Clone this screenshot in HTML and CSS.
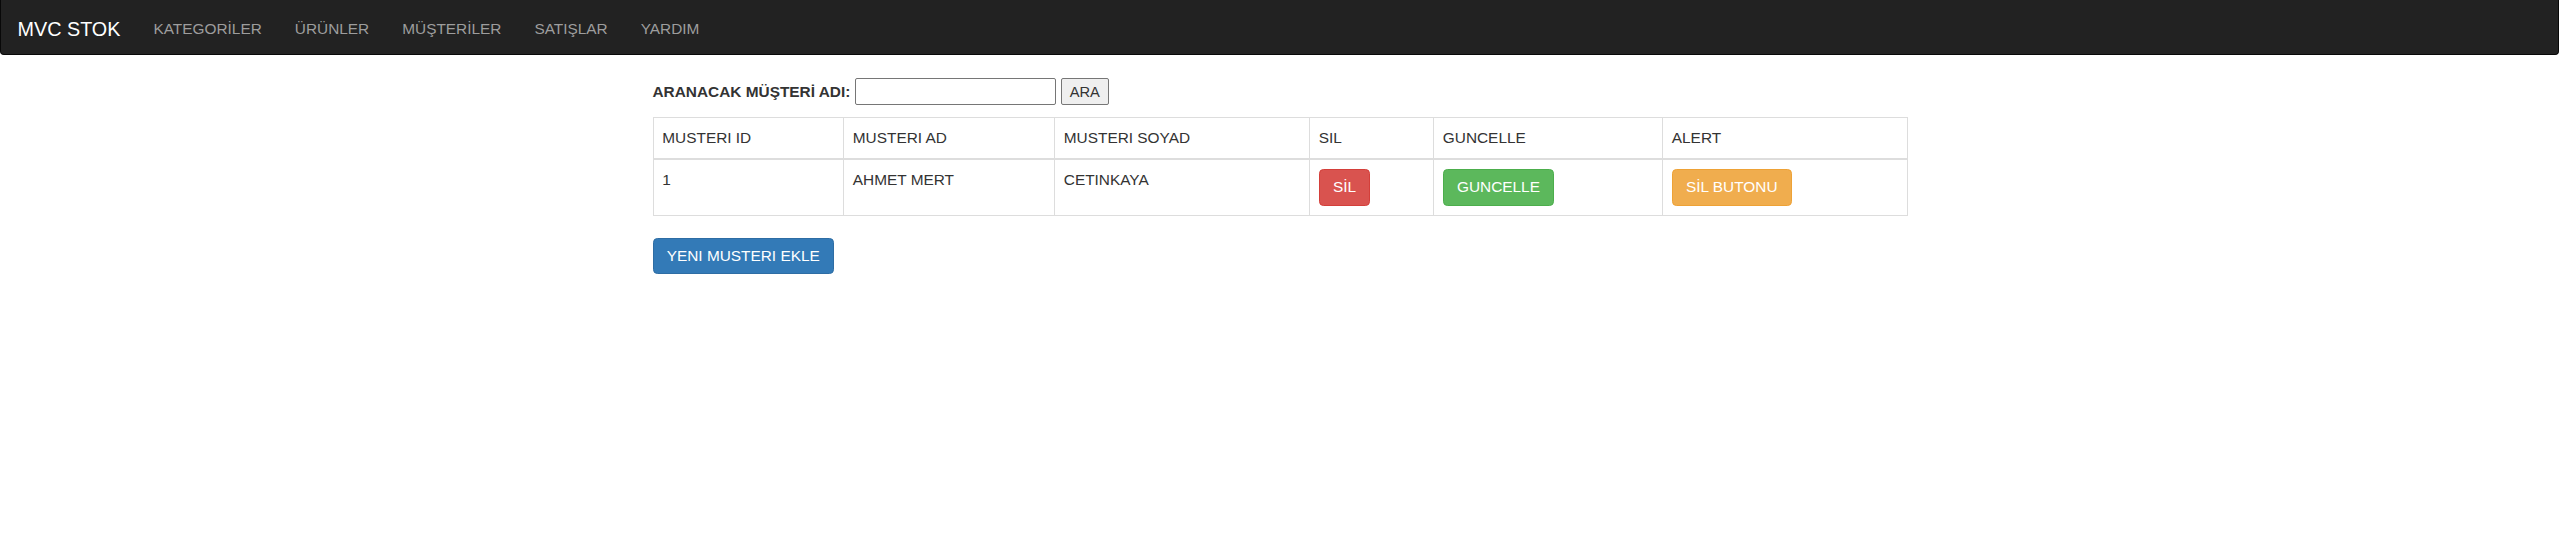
FILE: index.html
```html
<!DOCTYPE html>
<html lang="tr">
<head>
<meta charset="utf-8">
<title>MVC STOK</title>
<link rel="stylesheet" href="styles.css">
</head>
<body>
<nav class="navbar">
  <a class="brand" href="#">MVC STOK</a>
  <ul class="nav">
    <li><a href="#">KATEGORİLER</a></li>
    <li><a href="#">ÜRÜNLER</a></li>
    <li><a href="#">MÜŞTERİLER</a></li>
    <li><a href="#">SATIŞLAR</a></li>
    <li><a href="#">YARDIM</a></li>
  </ul>
</nav>
<main class="container">
  <form class="search-row">
    <label class="search-label" for="ara">ARANACAK MÜŞTERİ ADI:</label>
    <input class="search-input" id="ara" type="text">
    <button class="search-btn" type="button">ARA</button>
  </form>
  <table class="table">
    <colgroup>
      <col class="c1"><col class="c2"><col class="c3"><col class="c4"><col class="c5"><col class="c6">
    </colgroup>
    <thead>
      <tr>
        <th>MUSTERI ID</th>
        <th>MUSTERI AD</th>
        <th>MUSTERI SOYAD</th>
        <th>SIL</th>
        <th>GUNCELLE</th>
        <th>ALERT</th>
      </tr>
    </thead>
    <tbody>
      <tr>
        <td>1</td>
        <td>AHMET MERT</td>
        <td>CETINKAYA</td>
        <td><a class="btn btn-danger" href="#">SİL</a></td>
        <td><a class="btn btn-success" href="#">GUNCELLE</a></td>
        <td><a class="btn btn-warning" href="#">SİL BUTONU</a></td>
      </tr>
    </tbody>
  </table>
  <a class="btn btn-primary btn-new" href="#">YENI MUSTERI EKLE</a>
</main>
</body>
</html>
```

FILE: styles.css
```css
* { box-sizing: border-box; }

html, body {
  margin: 0;
  padding: 0;
  background: #fff;
}

body {
  font-family: "Liberation Sans", Arial, Helvetica, sans-serif;
  font-size: 15.4px;
  line-height: 22px;
  color: #333;
}

a { text-decoration: none; }

.navbar {
  display: flex;
  align-items: flex-start;
  height: 55px;
  background: #222;
  border: 1px solid #080808;
  border-top: 0;
  border-radius: 0 0 4px 4px;
  margin: 0 0 22px;
}

.brand {
  padding: 17.5px 16.5px 0;
  font-size: 19.8px;
  line-height: 22px;
  color: #fff;
}

.nav {
  display: flex;
  list-style: none;
  margin: 0;
  padding: 0;
}

.nav a {
  display: block;
  padding: 17.5px 16.5px 0;
  line-height: 22px;
  color: #9d9d9d;
}

.container {
  width: 1287px;
  margin: 0 auto;
  padding: 0 16.5px;
}

.search-row {
  display: flex;
  align-items: center;
  height: 29px;
  margin: 0;
}

.search-label {
  font-weight: bold;
  margin-right: 4.5px;
  color: #333;
}

.search-input {
  width: 201px;
  height: 27px;
  border: 1px solid #767676;
  border-radius: 2px;
  background: #fff;
  margin: 0 5px 0 0;
  padding: 1px 2px;
  font: inherit;
}

.search-btn {
  height: 27px;
  width: 48px;
  padding: 0;
  border: 1px solid #767676;
  border-radius: 2px;
  background: #efefef;
  color: #333;
  font-family: inherit;
  font-size: 14.7px;
  font-weight: normal;
}

.table {
  width: 1254px;
  table-layout: fixed;
  border-collapse: collapse;
  border: 1px solid #ddd;
  margin: 11.3px 0 22px;
}

.c1 { width: 190.5px; }
.c2 { width: 211px; }
.c3 { width: 255px; }
.c4 { width: 124px; }
.c5 { width: 229px; }
.c6 { width: 244.5px; }

.table th,
.table td {
  border: 1px solid #ddd;
  padding: 8.8px;
  text-align: left;
  vertical-align: top;
  font-weight: normal;
  line-height: 22px;
}

.table thead th {
  border-bottom: 2px solid #ddd;
  vertical-align: bottom;
}

.btn {
  display: inline-block;
  padding: 6.6px 13.2px;
  font-size: 15.4px;
  line-height: 22px;
  border: 1px solid transparent;
  border-radius: 4.4px;
  color: #fff;
  white-space: nowrap;
}

.btn-danger { background: #d9534f; border-color: #d43f3a; }
.btn-success { background: #5cb85c; border-color: #4cae4c; }
.btn-warning { background: #f0ad4e; border-color: #eea236; }
.btn-primary { background: #337ab7; border-color: #2e6da4; }

.btn-new {
  padding: 6px 13.2px;
}
```
